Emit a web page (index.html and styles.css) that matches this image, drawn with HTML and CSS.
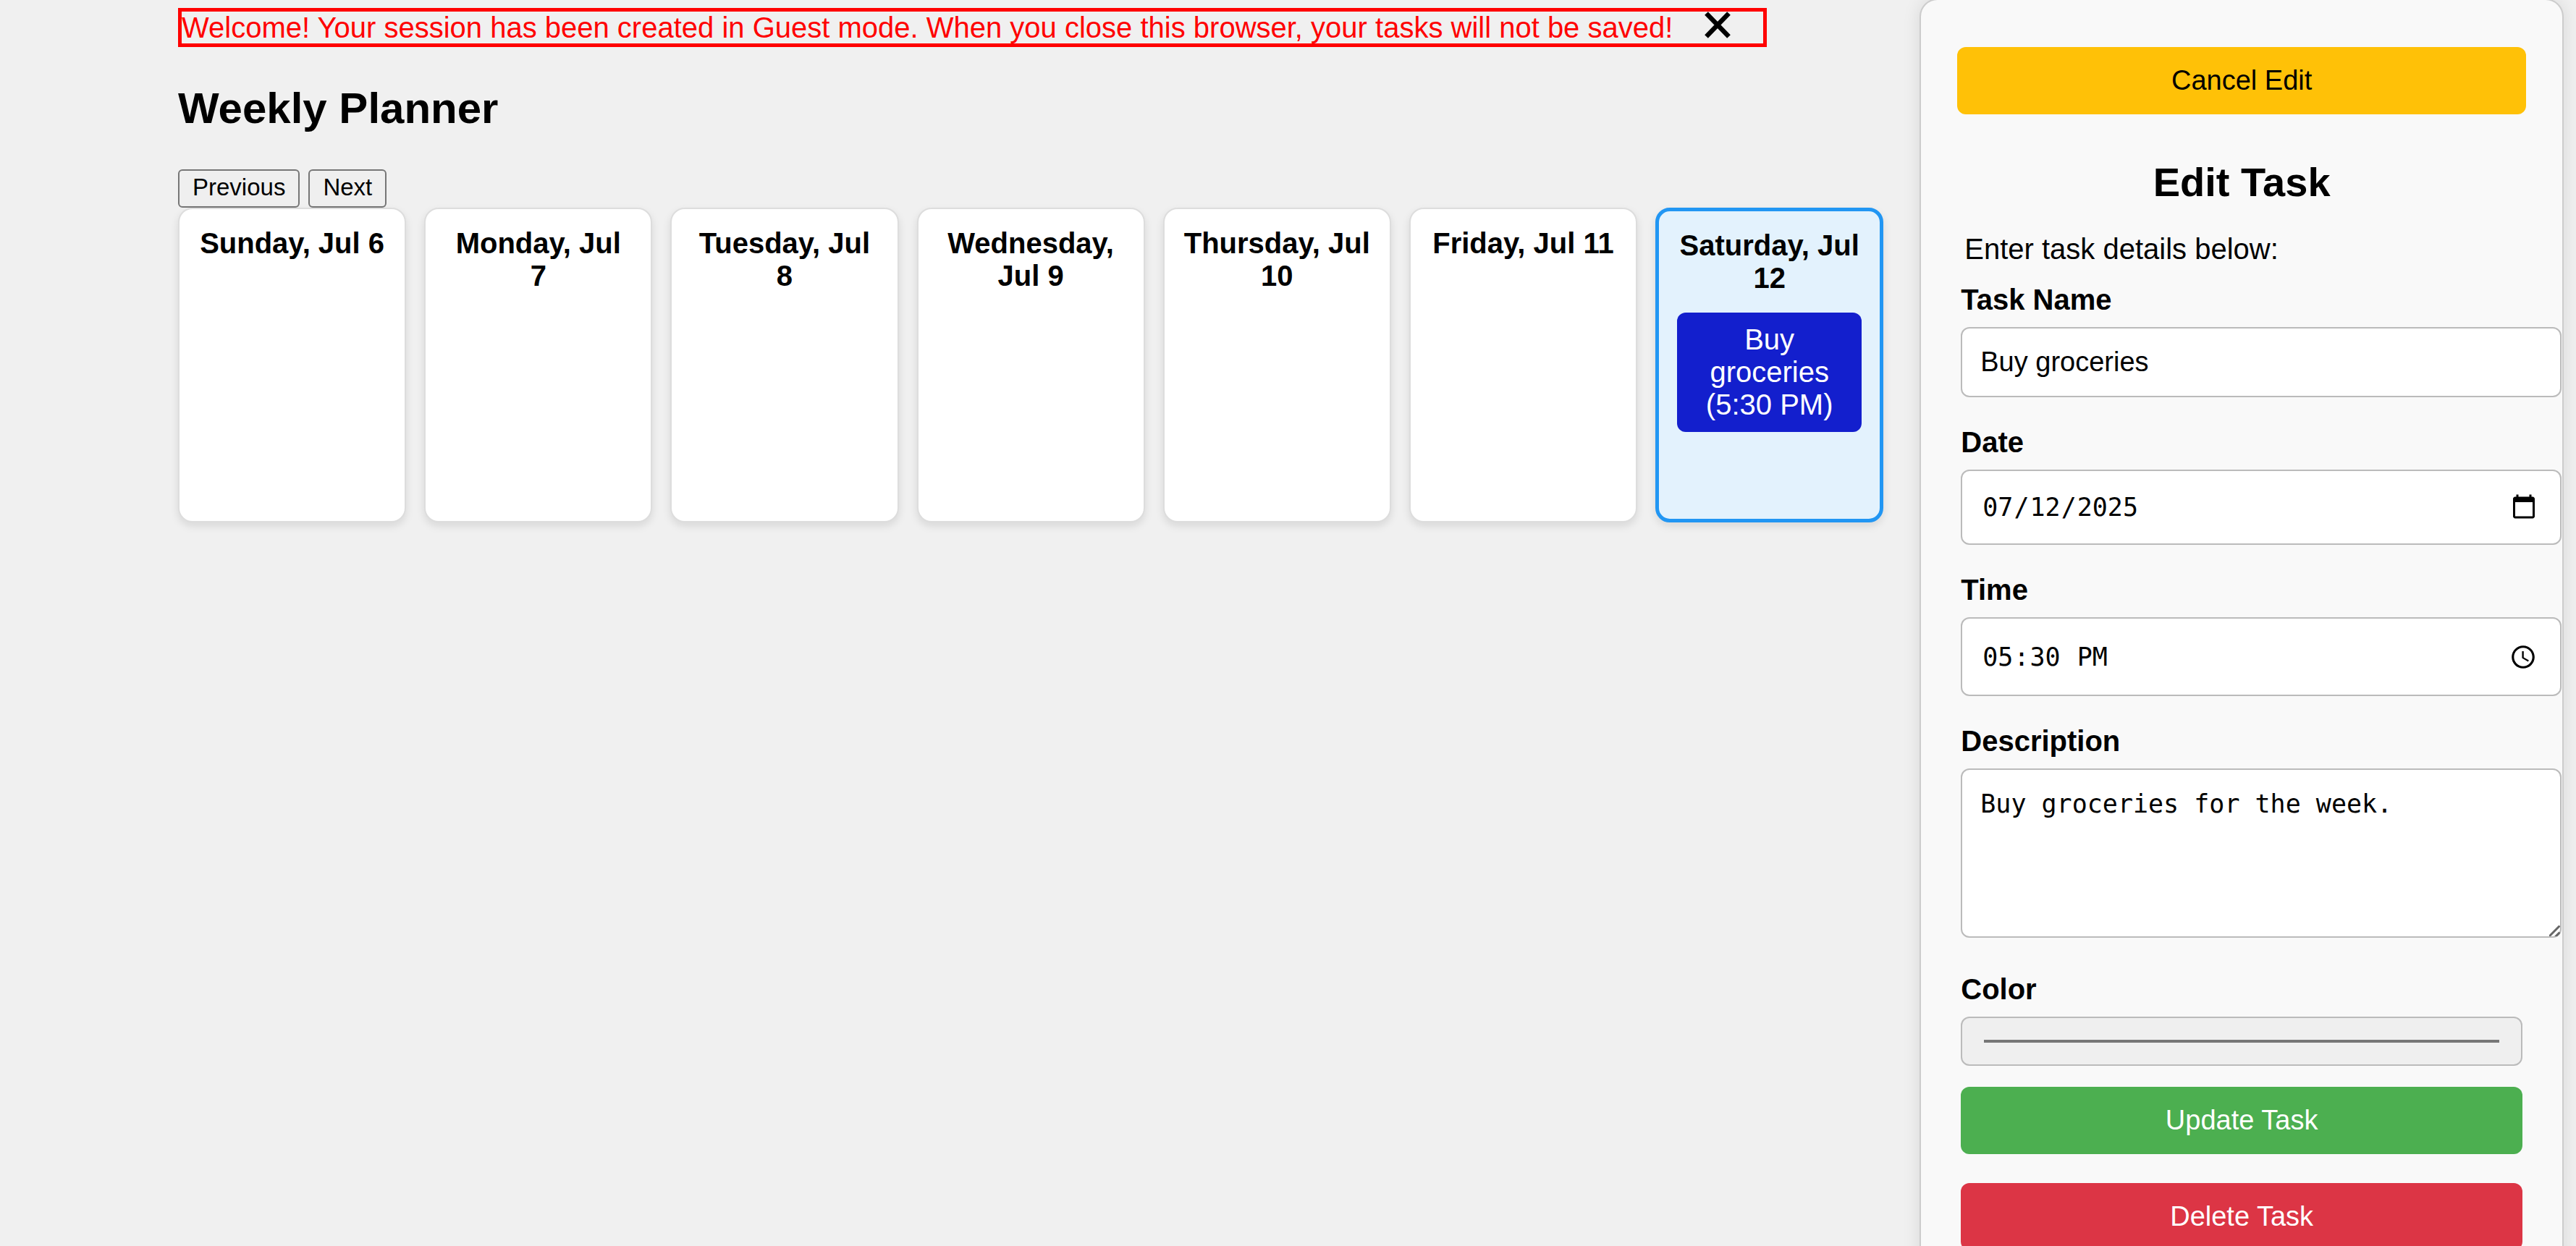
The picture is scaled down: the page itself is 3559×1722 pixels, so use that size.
FILE: index.html
```html
<!DOCTYPE html>
<html lang="en">
<head>
<meta charset="utf-8">
<title>Weekly Planner</title>
<link rel="stylesheet" href="styles.css">
</head>
<body>
<div class="layout">
  <main class="planner">
    <div class="notice" role="status">
      <span>Welcome! Your session has been created in Guest mode. When you close this browser, your tasks will not be saved!</span>
      <button class="notice-close" type="button" aria-label="Dismiss">
        <svg viewBox="0 0 36 38" width="36" height="38" aria-hidden="true"><path d="M2.5 2.5 L33.5 34.5 M33.5 2.5 L2.5 34.5" fill="none" stroke="#000" stroke-width="6.5"/></svg>
      </button>
    </div>
    <h1 class="title">Weekly Planner</h1>
    <div class="week-nav">
      <button type="button">Previous</button>
      <button type="button">Next</button>
    </div>
    <div class="week">
      <section class="day"><h2>Sunday, Jul 6</h2></section>
      <section class="day"><h2>Monday, Jul 7</h2></section>
      <section class="day"><h2>Tuesday, Jul 8</h2></section>
      <section class="day"><h2>Wednesday, Jul 9</h2></section>
      <section class="day"><h2>Thursday, Jul 10</h2></section>
      <section class="day"><h2>Friday, Jul 11</h2></section>
      <section class="day today">
        <h2>Saturday, Jul 12</h2>
        <div class="task">Buy groceries (5:30 PM)</div>
      </section>
    </div>
  </main>
  <aside class="sidebar">
    <button class="btn cancel" type="button">Cancel Edit</button>
    <h2 class="form-title">Edit Task</h2>
    <form class="form">
      <p class="hint">Enter task details below:</p>
      <label for="name">Task Name</label>
      <input class="field name" id="name" type="text" value="Buy groceries">
      <label for="date">Date</label>
      <input class="field date" id="date" type="date" value="2025-07-12">
      <label for="time">Time</label>
      <input class="field time" id="time" type="time" value="17:30">
      <label for="desc">Description</label>
      <textarea class="field desc" id="desc">Buy groceries for the week.</textarea>
      <label for="color">Color</label>
      <input class="color" id="color" type="color" value="#131fcd">
      <button class="btn update" type="submit">Update Task</button>
      <button class="btn delete" type="button">Delete Task</button>
    </form>
  </aside>
</div>
</body>
</html>
```

FILE: styles.css
```css
body {
  margin: 0;
  height: 100vh;
  overflow: hidden auto;
  scrollbar-width: none;
  background: #f0f0f0;
  color: #000;
  font: 40px/45px "Liberation Sans", Arial, sans-serif;
}

button {
  font-family: inherit;
  color: #000;
}

.layout {
  display: grid;
  grid-template-columns: minmax(0, 1fr) 25vw;
  column-gap: 50px;
  align-items: start;
  padding: 0 17px 0 246px;
}

/* Planner */
.planner {
  padding-top: 11px;
}

.notice {
  display: flex;
  align-items: flex-start;
  box-sizing: border-box;
  width: fit-content;
  height: 54px;
  padding-right: 45px;
  border: 5px solid #f00;
  color: #f00;
}

.notice-close {
  margin-left: 44px;
  padding: 0;
  border: 0;
  background: none;
}

.notice-close svg {
  display: block;
}

.title {
  margin: 50px 0;
  font-size: 60px;
  line-height: 69px;
}

.week-nav {
  display: flex;
  gap: 12px;
}

.week-nav button {
  height: 53px;
  padding: 0 18px 3px;
  border: 2px solid #767676;
  border-radius: 6px;
  background: #efefef;
  font-size: 33px;
}

.week {
  display: grid;
  grid-template-columns: repeat(7, minmax(0, 1fr));
  gap: 25px;
}

.day {
  box-sizing: border-box;
  min-height: 435px;
  padding: 25px;
  border: 2px solid #ddd;
  border-radius: 20px;
  background: #fff;
  box-shadow: 0 5px 12px rgba(0, 0, 0, 0.1);
  text-align: center;
}

.day h2 {
  margin: 0 0 25px;
  font-size: 40px;
}

.today {
  border: 5px solid #2196f3;
  background: #e3f2fd;
}

.task {
  padding: 15px;
  border-radius: 12px;
  background: #131fcd;
  color: #fff;
}

/* Edit form */
.sidebar {
  box-sizing: border-box;
  margin-top: -2px;
  padding: 65px 50px 50px;
  border: 2px solid #ccc;
  border-radius: 25px;
  background: #f9f9f9;
  box-shadow: 0 0 25px rgba(0, 0, 0, 0.1);
}

.btn {
  display: block;
  width: 100%;
  height: 93px;
  border: 0;
  border-radius: 12px;
  font-size: 38px;
}

.cancel {
  background: #ffc107;
}

.form-title {
  margin: 62px 0 38px;
  font-size: 56px;
  line-height: 64px;
  text-align: center;
}

.form {
  padding: 0 5px;
}

.hint {
  margin: 0 0 25px 5px;
}

.form label {
  display: block;
  margin-bottom: 15px;
  font-weight: bold;
}

.field {
  display: block;
  width: 100%;
  margin: 0 0 40px;
  padding: 0 25px;
  border: 2px solid #bbb;
  border-radius: 12px;
  background: #fff;
  color: #000;
  font: 35px "DejaVu Sans Mono", monospace;
}

.name {
  height: 93px;
  font: 38px "Liberation Sans", Arial, sans-serif;
}

.date {
  height: 100px;
}

.time {
  height: 105px;
}

.field::-webkit-datetime-edit {
  padding-left: 2px;
}

.field::-webkit-calendar-picker-indicator {
  width: 38px;
  height: 38px;
  margin-right: 4px;
}

.desc {
  height: 180px;
  margin-bottom: 49px;
  padding: 25px;
  line-height: 44px;
  resize: vertical;
}

.desc::-webkit-scrollbar {
  width: 22px;
}

.desc::-webkit-resizer {
  background: url("data:image/svg+xml,%3Csvg xmlns='http://www.w3.org/2000/svg' viewBox='0 0 22 22'%3E%3Cpath d='M3 19L18 4M12 19L18 13' stroke='%23666' stroke-width='3' fill='none'/%3E%3C/svg%3E") center / 22px 22px no-repeat;
}

.color {
  display: block;
  box-sizing: border-box;
  width: 100%;
  height: 68px;
  margin: 0 0 29px;
  padding: 25px;
  border: 2px solid #bbb;
  border-radius: 12px;
  background: #efefef;
}

.color::-webkit-color-swatch-wrapper {
  padding: 5px;
}

.color::-webkit-color-swatch {
  border: 2px solid #767676;
}

.update {
  margin-bottom: 40px;
  background: #4caf50;
  color: #fff;
}

.delete {
  background: #dc3545;
  color: #fff;
}
```
